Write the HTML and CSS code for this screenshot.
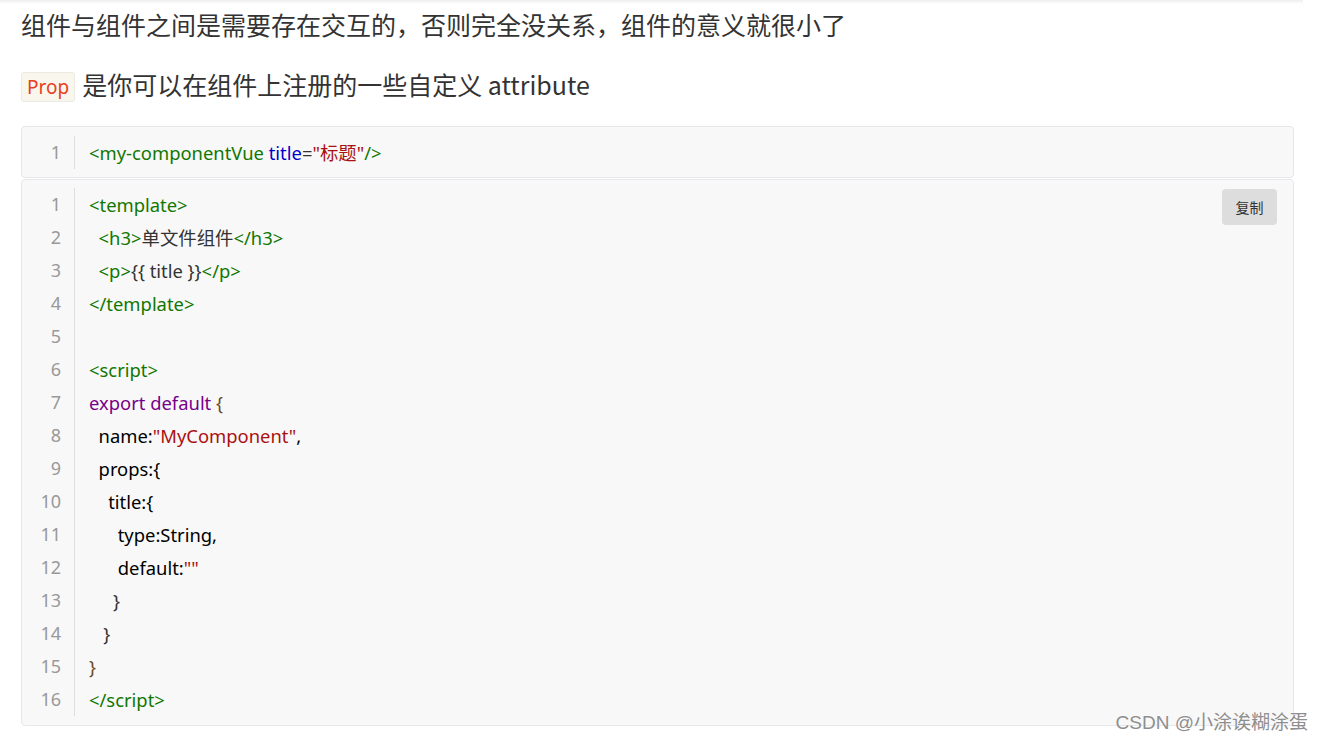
FILE: index.html
```
<html>
	<head>
		<title>Prop</title>
		<meta charset="utf-8">
		<link rel="stylesheet" href="styles.css">
	</head>
	<body>

		<div class="topShade"></div>

		<div class="content">
			<p class="para first">组件与组件之间是需要存在交互的，否则完全没关系，组件的意义就很小了</p>

			<p class="para second"><code class="inline">Prop</code> 是你可以在组件上注册的一些自定义 attribute</p>

			<div class="codeBlock">
				<div class="gutter">
					<div>1</div>
				</div>
				<pre class="code"><span class="tag">&lt;my-componentVue</span> <span class="attr">title</span><span class="plain">=</span><span class="str">"标题"</span><span class="tag">/&gt;</span></pre>
			</div>

			<div class="codeBlock second">
				<div class="gutter">
					<div>1</div>
					<div>2</div>
					<div>3</div>
					<div>4</div>
					<div>5</div>
					<div>6</div>
					<div>7</div>
					<div>8</div>
					<div>9</div>
					<div>10</div>
					<div>11</div>
					<div>12</div>
					<div>13</div>
					<div>14</div>
					<div>15</div>
					<div>16</div>
				</div>
<pre class="code"><span class="tag">&lt;template&gt;</span>
  <span class="tag">&lt;h3&gt;</span>单文件组件<span class="tag">&lt;/h3&gt;</span>
  <span class="tag">&lt;p&gt;</span>{{ title }}<span class="tag">&lt;/p&gt;</span>
<span class="tag">&lt;/template&gt;</span>

<span class="tag">&lt;script&gt;</span>
<span class="kw">export default</span> <span class="brace">{</span>
  <span class="prop">name:<span class="str">"MyComponent"</span>,</span>
  <span class="prop">props:{</span>
    <span class="prop">title:{</span>
      <span class="prop">type:String,</span>
      <span class="prop">default:<span class="str">""</span></span>
     }
   }
<span class="brace">}</span>
<span class="tag">&lt;/script&gt;</span></pre>

				<div class="copyBtn">复制</div>
				<div class="watermark">CSDN @小涂诶糊涂蛋</div>
			</div>
		</div>

	</body>
</html>
```

FILE: styles.css
```
body
{
	margin: 0;
	background-color: white;
	font-family: "Noto Sans", "Noto Sans CJK SC", sans-serif;
	color: #333;
}

.topShade
{
	height: 4px;
	margin-right: 20px;
	background: linear-gradient(#eeeeee, #ffffff);
}

.content
{
	padding: 0 29px 0 21px;
}

.para
{
	margin: 0;
	font-size: 25px;
	line-height: 36px;
	color: #333;
	font-family: "Noto Sans CJK SC", sans-serif;
}

.para.first
{
	margin-top: 2px;
}

.para.second
{
	margin-top: 24px;
	display: flex;
	align-items: center;
	gap: 7px;
}

.inline
{
	display: inline-block;
	margin-top: 6px;
	font-family: "Noto Sans", "Noto Sans CJK SC", sans-serif;
	font-size: 19px;
	line-height: 28px;
	padding: 0 5px;
	color: #e8401c;
	background-color: #f9f6ee;
	border: 1px solid #ece9e2;
	border-radius: 3px;
}

.codeBlock
{
	position: relative;
	display: flex;
	margin-top: 24px;
	padding: 9px 0 8px 0;
	background-color: #f8f8f8;
	border: 1px solid #e5e7ea;
	border-radius: 4px;
	font-size: 18px;
	line-height: 33px;
}

.codeBlock.second
{
	margin-top: 1px;
	padding: 8px 0 9px 0;
}

.gutter
{
	width: 39px;
	padding-right: 13px;
	border-right: 1px solid #dddddd;
	text-align: right;
	color: #999;
	font-family: "Noto Sans", sans-serif;
}

.code
{
	margin: 0 0 0 14px;
	font-family: "Noto Sans", "Noto Sans CJK SC", sans-serif;
	font-size: 18.4px;
	line-height: 33px;
	color: #333;
	white-space: pre;
}

.tag { color: #117700; }
.attr { color: #0000cc; }
.str { color: #aa1111; }
.kw { color: #770088; }
.plain { color: #333; }
.prop { color: #000; }
.brace { color: #6b4a1e; }

.copyBtn
{
	position: absolute;
	top: 9px;
	right: 16px;
	width: 55px;
	height: 36px;
	line-height: 36px;
	text-align: center;
	font-size: 14px;
	color: #333;
	background-color: #dddddd;
	border-radius: 4px;
	font-family: "Noto Sans CJK SC", sans-serif;
}

.watermark
{
	position: absolute;
	right: -15px;
	bottom: -14px;
	font-size: 19px;
	color: #8e8e8e;
	font-family: "Liberation Sans", "Noto Sans CJK SC", sans-serif;
	text-shadow: 0 0 2px #ffffff;
}
```
